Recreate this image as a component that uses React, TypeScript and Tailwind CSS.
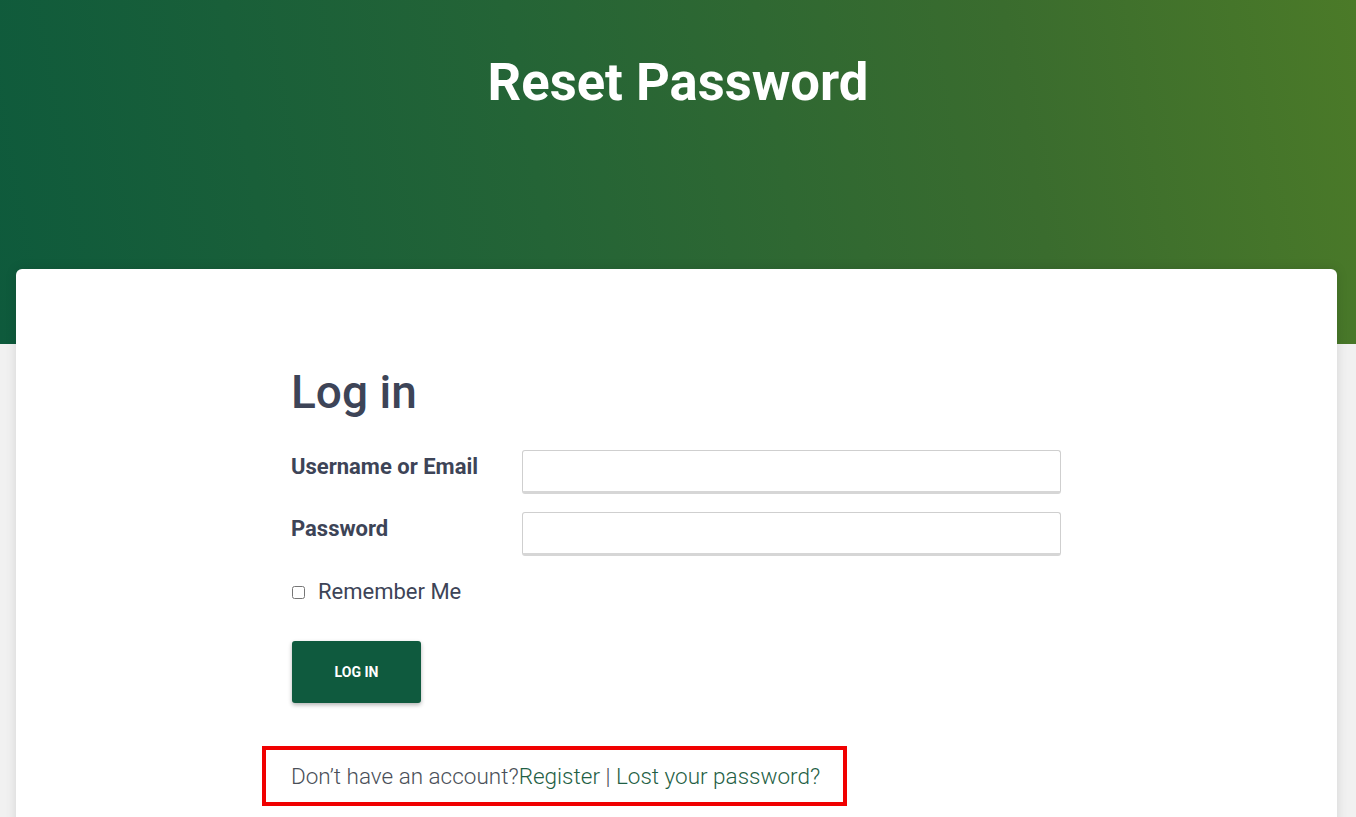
import React from "react";

export default function App() {
  return (
    <div className="min-h-[817px] w-full bg-[#f1f1f1] overflow-hidden" style={{ fontFamily: "Roboto, 'Liberation Sans', sans-serif" }}>
      <div className="h-[344px] w-full bg-[linear-gradient(80deg,#0e5a3c_0%,#246436_40%,#3a6c2e_75%,#4b7a28_100%)] flex justify-center">
        <h1 className="mt-[51px] text-[52.6px] leading-[62px] font-bold text-white">Reset Password</h1>
      </div>
      <div className="ml-[16px] mr-[19px] -mt-[75px] bg-white rounded-[6px] shadow-[0_0_12px_rgba(0,0,0,0.12)] min-h-[600px] pt-[96px] pl-[275px]">
        <div className="w-[770px]">
          <h2 className="text-[46px] leading-[54px] font-medium text-[#3d4457]">Log in</h2>
          <div className="mt-[31px] flex flex-col gap-[18px]">
            <div className="flex items-start">
              <label className="w-[231px] text-[22px] leading-[34px] font-bold text-[#3d4457]">Username or Email</label>
              <input className="w-[539px] h-[44px] border border-[#cfcfcf] border-b-[3px] border-b-[#d6d6d6] rounded-[3px] bg-white outline-none" />
            </div>
            <div className="flex items-start">
              <label className="w-[231px] text-[22px] leading-[34px] font-bold text-[#3d4457]">Password</label>
              <input type="password" className="w-[539px] h-[44px] border border-[#cfcfcf] border-b-[3px] border-b-[#d6d6d6] rounded-[3px] bg-white outline-none" />
            </div>
          </div>
          <div className="mt-[22px] flex items-center">
            <input type="checkbox" className="w-[13px] h-[13px] ml-[1px] mr-[13px]" />
            <span className="text-[22px] leading-[28px] text-[#3d4457]">Remember Me</span>
          </div>
          <button className="mt-[35px] ml-[1px] w-[129px] h-[62px] bg-[#0f5a3e] rounded-[3px] text-white text-[14px] font-bold shadow-[0_2px_4px_rgba(0,0,0,0.3)]">LOG IN</button>
          <div className="mt-[43px] -ml-[29px] w-[585px] h-[60px] border-[4px] border-[#f00000] flex items-center pl-[25px]">
            <span className="text-[22.5px] font-light text-[#4a4f58] whitespace-nowrap mt-[1px]">
              Don’t have an account?<a className="text-[#1f5f45]">Register</a> | <a className="text-[#1f5f45]">Lost your password?</a>
            </span>
          </div>
        </div>
      </div>
    </div>
  );
}
